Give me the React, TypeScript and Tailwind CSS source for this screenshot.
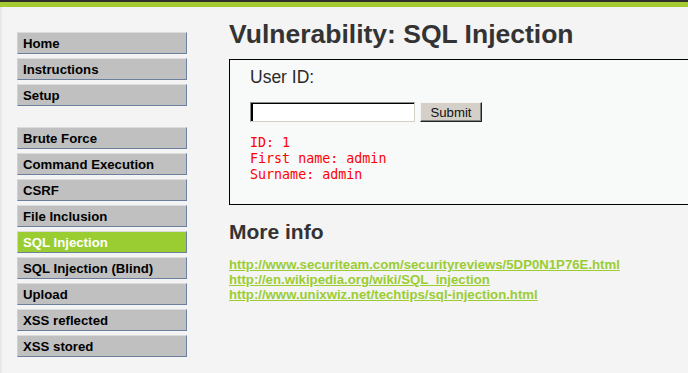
import React from "react";

const group1 = ["Home", "Instructions", "Setup"];
const group2 = [
  "Brute Force",
  "Command Execution",
  "CSRF",
  "File Inclusion",
  "SQL Injection",
  "SQL Injection (Blind)",
  "Upload",
  "XSS reflected",
  "XSS stored",
];

function MenuItem({ label, selected }: { label: string; selected?: boolean }) {
  return (
    <div
      className={
        "h-[22px] w-[170px] flex items-center pl-[5px] border border-t-[#dcdcdc] border-l-[#d0d0d0] border-r-[#7082a2] border-b-[#6d7f9e] text-[13.2px] leading-[15px] font-bold " +
        (selected ? "bg-[#9acd32] text-white" : "bg-[#c0c0c0] text-black")
      }
    >
      {label}
    </div>
  );
}

export default function App() {
  return (
    <div className="w-[688px] h-[373px] overflow-hidden bg-[#f4f4f4] font-['Liberation_Sans',Arial,sans-serif] flex flex-col">
      <div className="h-[2px] bg-[#2f2f2f] shrink-0" />
      <div className="h-[5px] bg-[#a5cb33] shrink-0" />
      <div className="flex flex-1 min-h-0">
        <div className="w-[2px] bg-[#e8e8e8] shrink-0" />
        <nav className="pl-[15px] pt-[25px] w-[227px] shrink-0">
          <div className="flex flex-col gap-[4px]">
            {group1.map((l) => (
              <MenuItem key={l} label={l} />
            ))}
          </div>
          <div className="flex flex-col gap-[4px] mt-[21px]">
            {group2.map((l) => (
              <MenuItem key={l} label={l} selected={l === "SQL Injection"} />
            ))}
          </div>
        </nav>
        <main className="pt-[12px] w-[520px] shrink-0">
          <h1 className="text-[26.5px] leading-[30px] font-bold text-[#333333] whitespace-nowrap">
            Vulnerability: SQL Injection
          </h1>
          <div className="mt-[10px] border border-black bg-[#f8f9f9] pl-[20px] pt-[7px] pb-[21px]">
            <div className="text-[17.5px] leading-[20px] text-[#2a2a2a]">User ID:</div>
            <div className="mt-[15px] flex gap-[5px] h-[20px]">
              <div className="w-[165px] h-[20px] bg-white border border-t-[#8a8a8a] border-l-[#8a8a8a] border-r-[#d4d0c8] border-b-[#d4d0c8] shadow-[inset_2px_1px_0_#000]" />
              <div className="w-[62px] h-[20px] bg-[#d4d0c8] border border-t-[#f4f4f4] border-l-[#f4f4f4] border-r-[#222] border-b-[#222] shadow-[inset_-1px_-1px_0_#808080] flex items-center justify-center text-[13.2px] leading-[15px] text-[#111]">
                Submit
              </div>
            </div>
            <pre className="mt-[13px] font-['DejaVu_Sans_Mono',monospace] text-[13.33px] leading-[16px] text-[#ff0000]">
{`ID: 1
First name: admin
Surname: admin`}
            </pre>
          </div>
          <h2 className="mt-[15px] text-[21px] leading-[24px] font-bold text-[#333333]">
            More info
          </h2>
          <div className="mt-[13px] flex flex-col items-start text-[13.2px] leading-[15px] font-bold">
            <a className="text-[#9acd32] underline" href="#">
              http://www.securiteam.com/securityreviews/5DP0N1P76E.html
            </a>
            <a className="text-[#9acd32] underline" href="#">
              http://en.wikipedia.org/wiki/SQL_injection
            </a>
            <a className="text-[#9acd32] underline" href="#">
              http://www.unixwiz.net/techtips/sql-injection.html
            </a>
          </div>
        </main>
      </div>
    </div>
  );
}
